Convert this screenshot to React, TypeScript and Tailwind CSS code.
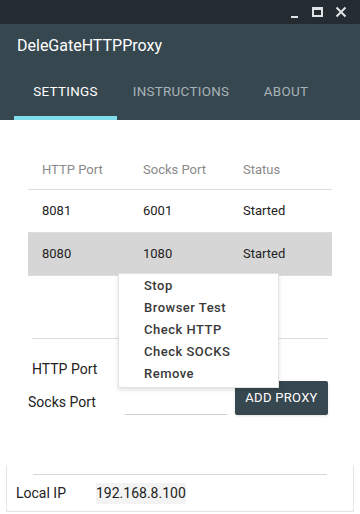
import React from 'react'

const rows = [
  { http: '8081', socks: '6001', status: 'Started', selected: false },
  { http: '8080', socks: '1080', status: 'Started', selected: true },
]

const menuItems = ['Stop', 'Browser Test', 'Check HTTP', 'Check SOCKS', 'Remove']

export default function App() {
  return (
    <div className="w-[360px] h-[514px] bg-white overflow-hidden flex flex-col" style={{ fontFamily: 'Roboto, "Noto Sans", sans-serif' }}>
      {/* title bar */}
      <div className="h-[24px] bg-[#252c31] flex items-center justify-end pr-[13px] gap-[12px] shrink-0">
        <div className="w-[11px] h-[11px] flex items-end justify-center">
          <div className="w-[7px] h-[2px] bg-[#dfe3e5]" />
        </div>
        <div className="w-[11px] h-[10px] border-2 border-t-[3px] border-[#dfe3e5]" />
        <svg width="12" height="12" viewBox="0 0 12 12">
          <path d="M1.5 1.5 L10.5 10.5 M10.5 1.5 L1.5 10.5" stroke="#dfe3e5" strokeWidth="2" />
        </svg>
      </div>

      {/* app bar */}
      <div className="bg-[#37474f] h-[96px] shrink-0 flex flex-col">
        <div className="px-[17px] pt-[10px] h-[44px] text-[16px] text-white">DeleGateHTTPProxy</div>
        <div className="flex h-[52px] text-[13.4px] tracking-[0.3px]">
          <div className="w-[103px] ml-[14px] flex flex-col">
            <div className="flex-1 flex items-center justify-center text-white">SETTINGS</div>
            <div className="h-[4px] bg-[#80deea]" />
          </div>
          <div className="w-[128px] flex items-center justify-center text-[#a8b3b9] pb-[4px]">INSTRUCTIONS</div>
          <div className="w-[60px] ml-[11px] flex items-center justify-center text-[#a8b3b9] pb-[4px]">ABOUT</div>
        </div>
      </div>

      {/* body */}
      <div className="relative flex-1 flex flex-col">
        <div className="mx-[28px] mt-[37px]">
          <div className="flex h-[33px] items-center pb-[7px] text-[13px] text-[#8a8a8a] border-b border-[#dcdcdc]">
            <div className="w-[101px] pl-[14px]">HTTP Port</div>
            <div className="w-[100px] pl-[14px]">Socks Port</div>
            <div className="pl-[14px]">Status</div>
          </div>
          {rows.map((r) => (
            <div
              key={r.http}
              className={`flex h-[43px] items-center text-[13px] text-[#222] border-b border-[#dcdcdc] ${r.selected ? 'bg-[#d6d6d6]' : ''}`}
            >
              <div className="w-[101px] pl-[14px]">{r.http}</div>
              <div className="w-[100px] pl-[14px]">{r.socks}</div>
              <div className="pl-[14px]">{r.status}</div>
            </div>
          ))}
        </div>

        <div className="mx-[32px] mt-[62px] border-t border-[#dcdcdc]" />

        <div className="flex mt-[18px] pr-[32px]">
          <div className="flex flex-col">
            <div className="flex items-center h-[24px] pl-[32px]">
              <span className="text-[14px] text-[#222] w-[93px]">HTTP Port</span>
              <div className="w-[102px] h-[24px] border-b border-[#cfcfcf]" />
            </div>
            <div className="flex items-end h-[28px] mt-[6px] pl-[28px]">
              <span className="text-[14px] text-[#222] w-[97px] pb-[2px]">Socks Port</span>
              <div className="w-[102px] h-[24px] border-b border-[#cfcfcf]" />
            </div>
          </div>
          <div className="flex-1 flex items-end justify-end">
            <button className="w-[93px] h-[34px] bg-[#37474f] text-white text-[13px] tracking-[0.3px] rounded-[2px] shadow-sm">ADD PROXY</button>
          </div>
        </div>

        <div className="mt-auto mx-[6px] mb-[2px] border-x border-b border-[#e4e4e4] h-[47px] flex flex-col">
          <div className="mx-[26px] mt-[9px] border-t border-[#d8d8d8]" />
          <div className="flex items-center h-[36px] text-[14px] text-[#222]">
            <span className="pl-[9px] w-[89px]">Local IP</span>
            <span className="bg-[#f3f3f3]">192.168.8.100</span>
          </div>
        </div>

        {/* context menu */}
        <div className="absolute left-[118px] top-[153px] w-[161px] bg-white border border-[#e2e2e2] shadow-[0_2px_4px_rgba(0,0,0,0.12)] pt-[1px] pb-[2px]">
          {menuItems.map((m) => (
            <div key={m} className="h-[22px] flex items-center pl-[25px] text-[13px] font-medium text-[#3a3a3a] tracking-[0.5px]">{m}</div>
          ))}
        </div>
      </div>
    </div>
  )
}
